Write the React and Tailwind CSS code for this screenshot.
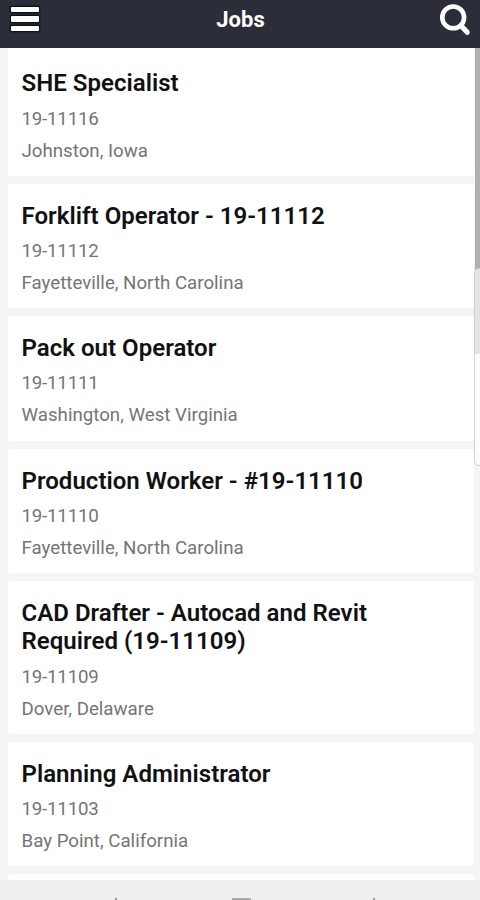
const jobs = [
  { title: ['SHE Specialist'], id: '19-11116', place: 'Johnston, Iowa' },
  { title: ['Forklift Operator - 19-11112'], id: '19-11112', place: 'Fayetteville, North Carolina' },
  { title: ['Pack out Operator'], id: '19-11111', place: 'Washington, West Virginia' },
  { title: ['Production Worker - #19-11110'], id: '19-11110', place: 'Fayetteville, North Carolina' },
  { title: ['CAD Drafter - Autocad and Revit', 'Required (19-11109)'], id: '19-11109', place: 'Dover, Delaware' },
  { title: ['Planning Administrator'], id: '19-11103', place: 'Bay Point, California' },
];

function Header() {
  return (
    <header className="flex h-12 shrink-0 items-start justify-between bg-[#2b2d38] text-white">
      <button aria-label="Menu" className="ml-[11px] mt-[7px] flex w-7 flex-col gap-1">
        <span className="h-[5.4px] w-full rounded-[1px] bg-white shadow-[0_0_2px_1px_#08090d]" />
        <span className="h-[5.4px] w-full rounded-[1px] bg-white shadow-[0_0_2px_1px_#08090d]" />
        <span className="h-[5.4px] w-full rounded-[1px] bg-white shadow-[0_0_2px_1px_#08090d]" />
      </button>
      <h1 className="ml-[3px] mt-[6px] text-[22px] font-bold leading-7">Jobs</h1>
      <button aria-label="Search" className="mr-[9px] mt-[4px]">
        <svg width="32" height="32" viewBox="0 0 32 32" fill="none" stroke="white">
          <circle cx="14.2" cy="13.4" r="10.9" strokeWidth="4.6" />
          <path d="M22 21.7L28.2 28.3" strokeWidth="5.2" strokeLinecap="round" />
        </svg>
      </button>
    </header>
  );
}

function JobCard({ job }) {
  return (
    <article className="shrink-0 rounded-[3px] bg-white pb-[12.4px] pl-[13.5px] pt-[17.8px] first:rounded-t-none first:pt-[21.4px]">
      <h2 className="text-[24px] font-semibold leading-[28.6px] tracking-[0.03px] text-[#111114]">
        {job.title.map((line) => (
          <span key={line} className="block whitespace-nowrap">{line}</span>
        ))}
      </h2>
      <p className="mt-[8.6px] text-[18.7px] leading-[25px] tracking-[-0.2px] text-[#757575]">{job.id}</p>
      <p className="mt-[7px] text-[18.7px] leading-[25px] text-[#757575]">{job.place}</p>
    </article>
  );
}

export default function App() {
  return (
    <div className="relative flex h-[900px] w-[480px] flex-col overflow-hidden bg-[#f5f5f5] font-['Roboto','Liberation_Sans',sans-serif]">
      <Header />
      <main className="flex h-[832px] shrink-0 flex-col gap-2 overflow-hidden pl-2 pr-[6px]">
        {jobs.map((job) => (
          <JobCard key={job.id} job={job} />
        ))}
        <div className="h-20 shrink-0 rounded-[3px] bg-white" />
      </main>
      <div className="absolute right-0 top-12 h-[224px] w-[5px] bg-[#b0b0b0]" />
      <div className="absolute left-[474px] top-[268px] h-[198px] w-4 overflow-hidden rounded-[5px] border border-[#d2d2d2] bg-[#fdfdfd]">
        <div className="h-[85px] bg-[#e4e4e4]" />
      </div>
      <nav className="relative h-5 bg-[#efefef]">
        <span className="absolute left-[115px] top-[18px] h-[2px] w-[2px] bg-[#999]" />
        <span className="absolute left-[232px] top-[18px] h-[2px] w-[19px] bg-[#aaa]" />
        <span className="absolute left-[373px] top-[18px] h-[2px] w-[2px] bg-[#999]" />
      </nav>
    </div>
  );
}
